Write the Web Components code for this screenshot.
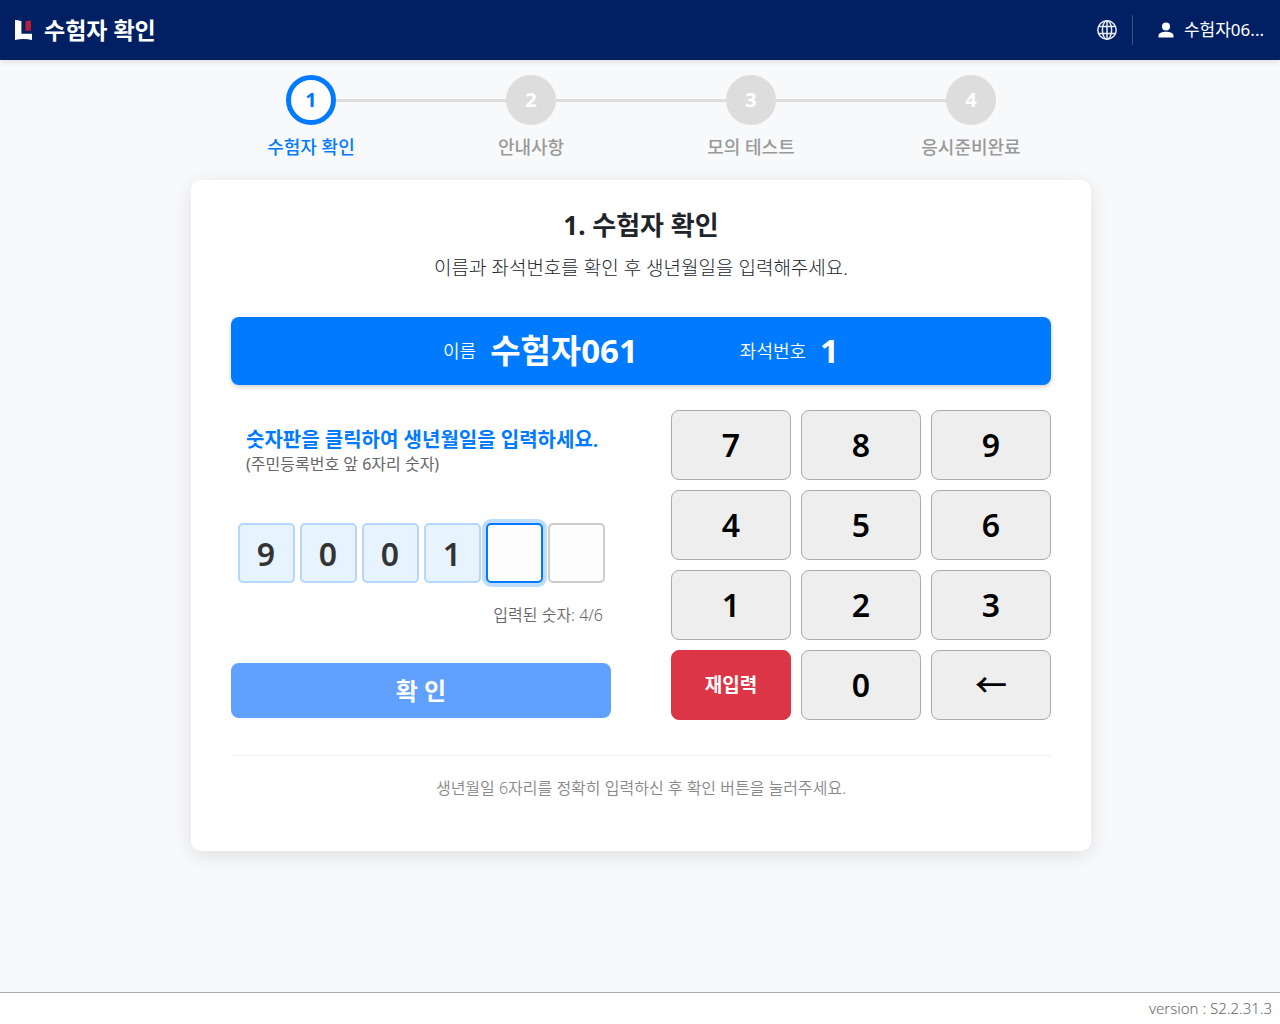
<!DOCTYPE html>
<html lang="ko">
<head>
<meta charset="utf-8">
<meta name="viewport" content="width=device-width, initial-scale=1">
<title>수험자 확인</title>
<style>
    body {
        margin: 0;
        min-height: 100vh;
        display: flex;
        flex-direction: column;
        background: #f8f9fb;
        color: #212529;
        font-family: "Noto Sans", "Noto Sans CJK KR", sans-serif;
        font-size: 16px;
        line-height: 24px;
    }

    main {
        flex: 1;
        padding: 15px 14px 24px 16px;
    }
</style>
</head>
<body>
<app-header heading="수험자 확인" user="수험자06..."></app-header>
<main>
    <step-list>
        <step-item number="1" active>수험자 확인</step-item>
        <step-item number="2">안내사항</step-item>
        <step-item number="3">모의 테스트</step-item>
        <step-item number="4">응시준비완료</step-item>
    </step-list>
    <check-card>
        <span slot="title">1. 수험자 확인</span>
        <span slot="description">이름과 좌석번호를 확인 후 생년월일을 입력해주세요.</span>
        <examinee-bar name="수험자061" seat="1"></examinee-bar>
        <birth-form value="9001" length="6"></birth-form>
        <span slot="note">생년월일 6자리를 정확히 입력하신 후 확인 버튼을 눌러주세요.</span>
    </check-card>
</main>
<app-footer>version : S2.2.31.3</app-footer>

<script>
"use strict";

function template(html) {
    const tmpl = document.createElement("template");
    tmpl.innerHTML = html;
    return tmpl;
}

class AppHeader extends HTMLElement {
    static template = template(`
        <style>
            :host {
                display: block;
            }

            header {
                display: flex;
                align-items: center;
                height: 60px;
                padding: 0 16px 0 15px;
                background: #002063;
                color: #fff;
                box-shadow: 0 2px 5px rgba(0, 0, 0, 0.1);
            }

            h1 {
                flex: 1;
                margin: 0 0 0 11px;
                font-size: 23px;
                font-weight: 700;
                line-height: 32px;
            }

            svg {
                display: block;
            }

            button {
                display: flex;
                align-items: center;
                gap: 10px;
                padding: 0;
                border: 0;
                background: none;
                color: inherit;
                font: inherit;
                font-size: 17px;
                cursor: pointer;
            }

            .user {
                height: 30px;
                margin-left: 15px;
                padding-left: 25px;
                border-left: 1px solid #3b5283;
            }
        </style>

        <header>
            <svg width="18" height="20" viewBox="0 0 18 20" aria-hidden="true">
                <path d="M0 0 Q3 0 6.4 1.2 V13.8 H17 V20 Q8.5 18 0 20 Z" fill="#fff" />
                <path d="M10.4 1.4 Q13 0.4 16 0.4 V10.8 H10.4 Z" fill="#b41f3a" />
            </svg>
            <h1></h1>
            <button type="button" class="lang" aria-label="언어 선택">
                <svg width="20" height="20" viewBox="0 0 20 20" fill="none" stroke="#e8ebf2" stroke-width="1.5">
                    <circle cx="10" cy="10" r="9.2" />
                    <ellipse cx="10" cy="10" rx="4.6" ry="9.2" />
                    <path d="M10 1V19M2 6.5H18M2 13.5H18" />
                </svg>
            </button>
            <button type="button" class="user">
                <svg width="16" height="16" viewBox="0 0 16 16" fill="#fff" aria-hidden="true">
                    <circle cx="8" cy="4.5" r="4" />
                    <path d="M0.5 15.5V13.5C0.5 11 4 9.7 8 9.7S15.5 11 15.5 13.5V15.5Z" />
                </svg>
                <span></span>
            </button>
        </header>
    `);
    connectedCallback() {
        const clone = AppHeader.template.content.cloneNode(true);
        clone.querySelector("h1").textContent = this.getAttribute("heading");
        clone.querySelector("span").textContent = this.getAttribute("user");
        this.attachShadow({ mode: "open" }).appendChild(clone);
    }
}

class StepList extends HTMLElement {
    static template = template(`
        <style>
            :host {
                display: grid;
                grid-auto-flow: column;
                grid-auto-columns: 1fr;
                max-width: 880px;
                margin: 0 auto 19px;
            }
        </style>
        <slot></slot>
    `);
    connectedCallback() {
        this.setAttribute("role", "list");
        this.attachShadow({ mode: "open" }).appendChild(StepList.template.content.cloneNode(true));
    }
}

class StepItem extends HTMLElement {
    static template = template(`
        <style>
            :host {
                display: flex;
                flex-direction: column;
                gap: 9px;
                color: #999;
                font-size: 18px;
                font-weight: 500;
                line-height: 27px;
                text-align: center;
            }

            .track {
                display: flex;
                align-items: center;
            }

            /* the two halves of the line that joins the circles */
            .track::before,
            .track::after {
                content: "";
                flex: 1;
                height: 3px;
                background: #ddd;
            }

            :host(:first-child) .track::before,
            :host(:last-child) .track::after {
                background: none;
            }

            .circle {
                box-sizing: border-box;
                width: 50px;
                height: 50px;
                border: 5px solid #ddd;
                border-radius: 50%;
                background: #ddd;
                color: #fff;
                font-size: 20px;
                font-weight: 700;
                line-height: 40px;
            }

            :host([active]) {
                color: #007bff;
            }

            :host([active]) .circle {
                border-color: #007bff;
                background: #fff;
                color: #007bff;
            }
        </style>

        <div class="track"><div class="circle"></div></div>
        <div><slot></slot></div>
    `);
    connectedCallback() {
        const clone = StepItem.template.content.cloneNode(true);
        clone.querySelector(".circle").textContent = this.getAttribute("number");
        this.setAttribute("role", "listitem");
        this.attachShadow({ mode: "open" }).appendChild(clone);
    }
}

class CheckCard extends HTMLElement {
    static template = template(`
        <style>
            :host {
                display: block;
                box-sizing: border-box;
                max-width: 900px;
                margin: 0 auto;
                padding: 24px 40px 51px;
                border-radius: 10px;
                background: #fff;
                box-shadow: 0 5px 20px rgba(0, 0, 0, 0.1);
            }

            h2 {
                margin: 0;
                font-size: 26px;
                font-weight: 700;
                line-height: 42px;
                text-align: center;
            }

            p {
                margin: 8px 0 35px;
                font-size: 19px;
                font-weight: 300;
                line-height: 28px;
                text-align: center;
            }

            footer {
                margin-top: 35px;
                padding-top: 20px;
                border-top: 1px solid #eee;
                color: #888;
                font-weight: 350;
                text-align: center;
            }
        </style>

        <h2><slot name="title"></slot></h2>
        <p><slot name="description"></slot></p>
        <slot></slot>
        <footer><slot name="note"></slot></footer>
    `);
    connectedCallback() {
        this.attachShadow({ mode: "open" }).appendChild(CheckCard.template.content.cloneNode(true));
    }
}

class ExamineeBar extends HTMLElement {
    static template = template(`
        <style>
            :host {
                display: block;
                margin-bottom: 25px;
                padding: 12px;
                border-radius: 8px;
                background: #007bff;
                color: #fff;
                box-shadow: 0 2px 5px rgba(0, 0, 0, 0.2);
            }

            dl {
                display: flex;
                justify-content: center;
                gap: 102px;
                margin: 0;
            }

            div {
                display: flex;
                align-items: center;
                gap: 14px;
            }

            dt {
                font-size: 18px;
                font-weight: 350;
            }

            dd {
                margin: 0;
                font-size: 33px;
                font-weight: 700;
                line-height: 44px;
            }
        </style>

        <dl>
            <div><dt>이름</dt><dd id="name"></dd></div>
            <div><dt>좌석번호</dt><dd id="seat"></dd></div>
        </dl>
    `);
    connectedCallback() {
        const clone = ExamineeBar.template.content.cloneNode(true);
        clone.querySelector("#name").textContent = this.getAttribute("name");
        clone.querySelector("#seat").textContent = this.getAttribute("seat");
        this.attachShadow({ mode: "open" }).appendChild(clone);
    }
}

class BirthForm extends HTMLElement {
    static template = template(`
        <style>
            :host {
                display: block;
            }

            form {
                display: grid;
                grid-template-columns: 1fr 1fr;
                gap: 60px;
            }

            .entry {
                display: flex;
                flex-direction: column;
            }

            .guide {
                margin: 18px 0 47px 15px;
                color: #666;
                font-weight: 400;
            }

            .guide strong {
                display: block;
                color: #007bff;
                font-size: 20px;
                font-weight: 600;
            }

            .count {
                margin: 20px 8px 36px;
                color: #666;
                font-weight: 350;
                text-align: right;
            }

            .submit {
                height: 55px;
                border: 0;
                border-radius: 8px;
                background: #60a0ff;
                color: #fff;
                font: inherit;
                font-size: 24px;
                font-weight: 700;
            }
        </style>

        <form>
            <div class="entry">
                <div class="guide">
                    <strong>숫자판을 클릭하여 생년월일을 입력하세요.</strong>
                    (주민등록번호 앞 6자리 숫자)
                </div>
                <digit-boxes></digit-boxes>
                <div class="count"></div>
                <button type="submit" class="submit">확 인</button>
            </div>
            <key-pad></key-pad>
        </form>
    `);
    connectedCallback() {
        this.length = Number(this.getAttribute("length"));
        this.value = this.getAttribute("value");
        this.attachShadow({ mode: "open" }).appendChild(BirthForm.template.content.cloneNode(true));
        this.shadowRoot.querySelector("key-pad").addEventListener("press", (e) => this.press(e.detail));
        this.shadowRoot.querySelector("form").addEventListener("submit", (e) => e.preventDefault());
        this.update();
    }
    press(key) {
        if (key === "재입력") {
            this.value = "";
        }
        else if (key === "←") {
            this.value = this.value.slice(0, -1);
        }
        else {
            this.value = (this.value + key).slice(0, this.length);
        }
        this.update();
    }
    update() {
        this.shadowRoot.querySelector("digit-boxes").show(this.value, this.length);
        this.shadowRoot.querySelector(".count").textContent = `입력된 숫자: ${this.value.length}/${this.length}`;
        const submit = this.shadowRoot.querySelector(".submit");
        submit.disabled = this.value.length < this.length;
    }
}

class DigitBoxes extends HTMLElement {
    static template = template(`
        <style>
            :host {
                display: flex;
                justify-content: center;
                gap: 5px;
            }

            input {
                box-sizing: border-box;
                width: 57px;
                min-width: 0;
                height: 60px;
                padding: 0;
                border: 2px solid #ccc;
                border-radius: 5px;
                outline: none;
                background: #fdfdfd;
                color: #333;
                font: inherit;
                font-size: 32px;
                font-weight: 600;
                text-align: center;
            }

            .filled {
                border-color: #b3d7ff;
                background: #e7f3ff;
            }

            .current {
                border-color: #007bff;
                box-shadow: 0 0 0 4px rgba(0, 123, 255, 0.25);
            }
        </style>
    `);
    connectedCallback() {
        this.attachShadow({ mode: "open" }).appendChild(DigitBoxes.template.content.cloneNode(true));
    }
    show(value, length) {
        this.shadowRoot.querySelectorAll("input").forEach((input) => input.remove());
        for (let i = 0; i < length; i++) {
            const input = document.createElement("input");
            input.type = "text";
            input.readOnly = true;
            input.value = value[i] ?? "";
            input.setAttribute("aria-label", `생년월일 ${i + 1}번째 숫자`);
            input.classList.toggle("filled", i < value.length);
            input.classList.toggle("current", i === value.length);
            this.shadowRoot.appendChild(input);
        }
    }
}

class KeyPad extends HTMLElement {
    static template = template(`
        <style>
            :host {
                display: grid;
                grid-template-columns: repeat(3, 1fr);
                grid-auto-rows: 70px;
                gap: 10px;
            }

            button {
                padding: 0;
                border: 1px solid #aaa;
                border-radius: 8px;
                background: #eee;
                color: #000;
                font: inherit;
                font-size: 32px;
                font-weight: 600;
                cursor: pointer;
            }

            .reset {
                border-color: #dc3545;
                background: #dc3545;
                color: #fff;
                font-size: 19px;
                font-weight: 700;
            }

            .back {
                font-weight: 500;
            }
        </style>
    `);
    connectedCallback() {
        this.attachShadow({ mode: "open" }).appendChild(KeyPad.template.content.cloneNode(true));
        for (const key of ["7", "8", "9", "4", "5", "6", "1", "2", "3", "재입력", "0", "←"]) {
            const button = document.createElement("button");
            button.type = "button";
            button.textContent = key;
            button.classList.toggle("reset", key === "재입력");
            button.classList.toggle("back", key === "←");
            button.addEventListener("click", () => {
                this.dispatchEvent(new CustomEvent("press", { detail: key }));
            });
            this.shadowRoot.appendChild(button);
        }
    }
}

class AppFooter extends HTMLElement {
    static template = template(`
        <style>
            :host {
                display: block;
                padding: 3px 8px 4px;
                border-top: 1px solid #aaa;
                background: #fff;
                color: #666;
                font-size: 15px;
                font-weight: 300;
                text-align: right;
            }
        </style>
        <slot></slot>
    `);
    connectedCallback() {
        this.attachShadow({ mode: "open" }).appendChild(AppFooter.template.content.cloneNode(true));
    }
}

customElements.define("app-header", AppHeader);
customElements.define("step-list", StepList);
customElements.define("step-item", StepItem);
customElements.define("check-card", CheckCard);
customElements.define("examinee-bar", ExamineeBar);
customElements.define("digit-boxes", DigitBoxes);
customElements.define("key-pad", KeyPad);
customElements.define("birth-form", BirthForm);
customElements.define("app-footer", AppFooter);
</script>
</body>
</html>
